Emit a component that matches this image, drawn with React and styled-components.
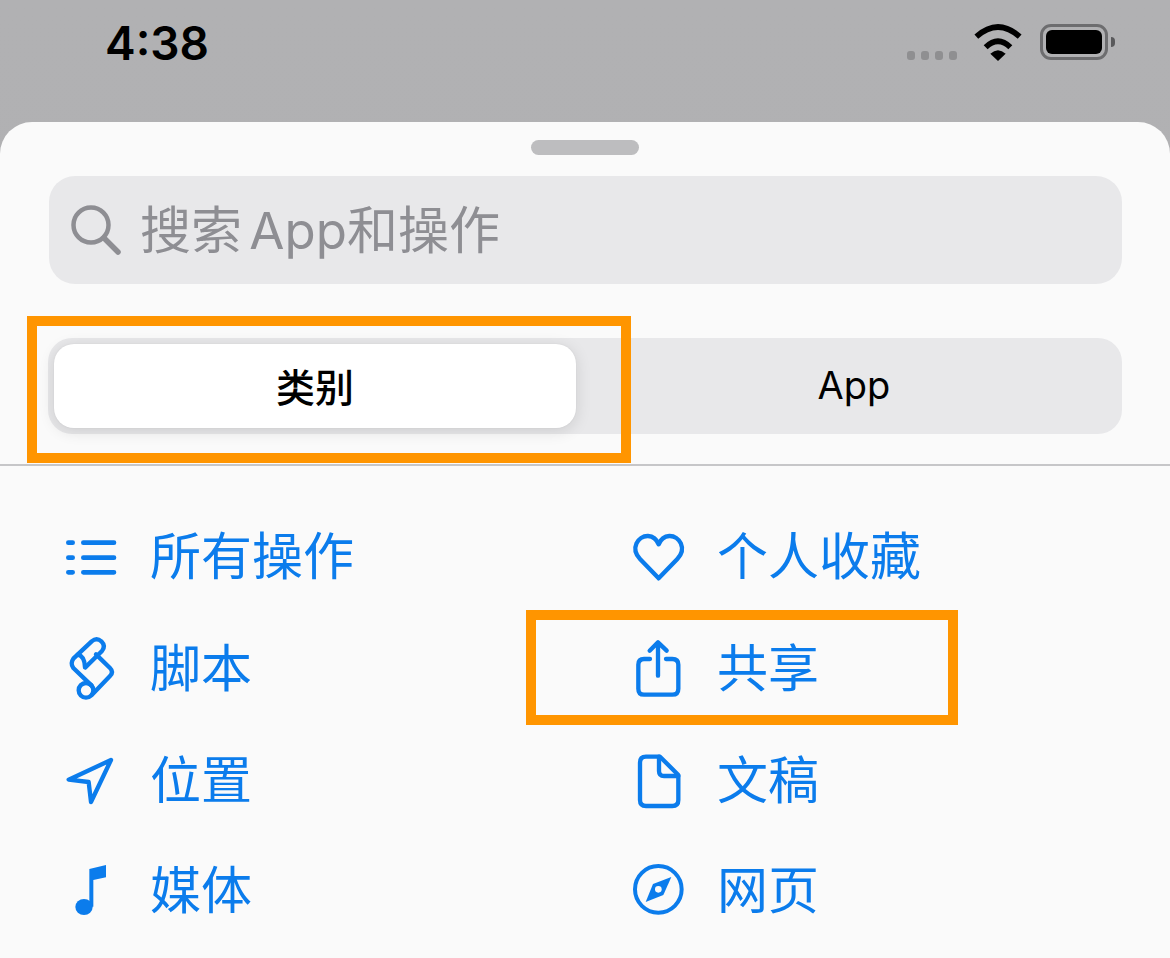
import React from 'react';
import styled, { createGlobalStyle } from 'styled-components';

const GlobalStyle = createGlobalStyle`
  html, body {
    margin: 0;
    padding: 0;
    height: 958px;
    overflow: hidden;
    background: #b0b0b2;
  }
  * { box-sizing: border-box; }
`;

const CJK = `"Inter", "Noto Sans CJK SC", sans-serif`;
const BLUE = '#0b7cec';
const ORANGE = '#ff9500';

const Page = styled('div')`
  position: relative;
  width: 1170px;
  height: 958px;
  overflow: hidden;
  font-family: ${CJK};
  background: linear-gradient(#b1b1b3 0%, #b0b0b2 75%, #a9a9ab 100%);
`;

const StatusBar = styled('div')`
  height: 122px;
  display: flex;
  align-items: flex-start;
  justify-content: space-between;
  padding: 15px 55px 0 105px;
`;

const Time = styled('div')`
  font-family: "Inter", sans-serif;
  font-size: 46px;
  line-height: 57px;
  font-weight: 600;
  color: #000;
`;

const StatusIcons = styled('div')`
  display: flex;
  align-items: flex-start;
  padding-top: 9px;
`;

const SignalDots = styled('div')`
  display: flex;
  gap: 5.5px;
  margin-top: 27px;
  margin-right: 16px;
`;

const SignalDot = styled('span')`
  width: 8.5px;
  height: 9px;
  border-radius: 3px;
  background: #8f8f91;
`;

const Battery = styled('div')`
  width: 68px;
  height: 36px;
  margin-left: 17px;
  padding: 3px;
  border: 3px solid #6d6d6f;
  border-radius: 11px;
`;

const BatteryFill = styled('div')`
  height: 100%;
  border-radius: 6px;
  background: #000;
`;

const BatteryNub = styled('div')`
  width: 4px;
  height: 10px;
  margin-top: 13px;
  margin-left: 3px;
  border-radius: 0 5px 5px 0;
  background: #59595b;
`;

const Sheet = styled('div')`
  height: 836px;
  background: #fafafa;
  border-radius: 32px 32px 0 0;
`;

const Handle = styled('div')`
  width: 108px;
  height: 15px;
  margin: 0 auto;
  position: relative;
  top: 18px;
  border-radius: 8px;
  background: #bdbdbf;
`;

const Search = styled('div')`
  height: 108px;
  margin: 39px 48px 0 49px;
  padding-left: 22px;
  display: flex;
  align-items: center;
  gap: 19px;
  border-radius: 26px;
  background: #e8e8ea;
`;

const Placeholder = styled('span')`
  font-size: 51px;
  line-height: 60px;
  word-spacing: -7px;
  color: #8e8e93;
  margin-top: 2px;
`;

const Segments = styled('div')`
  height: 96px;
  margin: 54px 48px 0 48px;
  padding: 6px 0 6px 6px;
  display: grid;
  grid-template-columns: 522px 1fr;
  column-gap: 10px;
  border-radius: 24px;
  background: #e8e8ea;
`;

const Segment = styled('div')`
  display: flex;
  align-items: center;
  justify-content: center;
  padding-bottom: 3px;
  font-size: ${p => (p.active ? '39px' : '38px')};
  font-weight: ${p => (p.active ? 500 : 400)};
  color: #000;
  border-radius: 20px;
  background: ${p => (p.active ? '#fff' : 'transparent')};
  box-shadow: ${p => (p.active ? '0 3px 16px rgba(0, 0, 0, 0.12), 0 0 2px rgba(0, 0, 0, 0.06)' : 'none')};
`;

const Divider = styled('div')`
  height: 2px;
  margin-top: 30px;
  background: #c6c6c8;
`;

const Categories = styled('div')`
  display: grid;
  grid-template-columns: 567px 1fr;
  grid-template-rows: 112px 112px 112px 108px;
  padding: 34px 0 0 61px;
`;

const Category = styled('div')`
  display: flex;
  align-items: center;
  gap: 29px;
  font-size: 51px;
  color: ${BLUE};
`;

const CategoryLabel = styled('span')`
  margin-bottom: 6px;
`;

const IconBox = styled('svg')`
  flex: none;
  width: 60px;
  height: 60px;
  overflow: visible;
`;

const Callout = styled('div')`
  position: absolute;
  left: ${p => p.x}px;
  top: ${p => p.y}px;
  width: ${p => p.w}px;
  height: ${p => p.h}px;
  border: 10px solid ${ORANGE};
`;

const lineProps = {
  fill: 'none',
  stroke: BLUE,
  strokeWidth: 13,
  strokeLinecap: 'round',
  strokeLinejoin: 'round',
};

const Wifi = () => (
  <svg width="50" height="38" viewBox="282 40 150 114" style={{ display: 'block' }}>
    <g fill="none" stroke="#000" strokeWidth="17">
      <path d="M292 78Q357 20 422 78" />
      <path d="M320 110Q357 74 394 110" />
    </g>
    <path d="M334 129Q357 108 380 129L357 151Z" fill="#000" />
  </svg>
);

const SearchIcon = () => (
  <svg width="50" height="50" viewBox="0 0 50 50" style={{ flex: 'none' }}>
    <circle cx="20" cy="20" r="17.5" fill="none" stroke="#8e8e93" strokeWidth="4.5" />
    <path d="M33 33L47 47" stroke="#8e8e93" strokeWidth="5.5" strokeLinecap="round" />
  </svg>
);

const ListIcon = () => (
  <IconBox viewBox="63 -30 180 180" {...lineProps}>
    <g strokeWidth="14">
      <path d="M85 45H98M85 90H98M85 134H98" transform="translate(0 -25)" />
      <path d="M130 45H222M130 90H222M130 134H222" transform="translate(0 -25)" />
    </g>
  </IconBox>
);

const ScriptIcon = () => (
  <IconBox viewBox="63 354 180 180" {...lineProps}>
    <path d="M168 403L210 444Q222 456 210 468L156 524" />
    <circle cx="138" cy="511" r="22" />
    <path d="M155 497L100 444Q90 430 100 416L155 364Q170 352 184 364Q198 378 186 393L136 442" />
    <path d="M113 404Q134 408 135 442" />
  </IconBox>
);

const LocationIcon = () => (
  <IconBox viewBox="63 690 180 180" {...lineProps}>
    <path d="M213 720L86 779L146 786L153 846Z" />
  </IconBox>
);

const MusicIcon = () => (
  <IconBox viewBox="63 1020 180 180">
    <path d="M148 1047L198 1035V1072L160 1080V1160H148Z" fill={BLUE} />
    <ellipse cx="132" cy="1161" rx="26" ry="24" fill={BLUE} />
  </IconBox>
);

const HeartIcon = () => (
  <IconBox viewBox="54 15 180 180" {...lineProps}>
    <path d="M146 172L90 114C60 82 84 44 114 45C130 46 140 55 146 70C152 55 162 46 178 45C208 44 232 82 202 114Z" />
  </IconBox>
);

const ShareIcon = () => (
  <IconBox viewBox="54 354 180 180" {...lineProps}>
    <path d="M144 467V368M119 392L144 367L170 392" />
    <path d="M120 417H102Q85 417 85 434V506Q85 524 102 524H187Q205 524 205 506V434Q205 417 187 417H168" />
  </IconBox>
);

const DocIcon = () => (
  <IconBox viewBox="54 690 180 180" {...lineProps}>
    <path d="M150 710H108Q90 710 90 728V840Q90 858 108 858H187Q205 858 205 840V765Z" />
    <path d="M147 710V753Q147 768 162 768H205" />
  </IconBox>
);

const CompassIcon = () => (
  <IconBox viewBox="54 1020 180 180">
    <circle cx="145" cy="1108" r="70" fill="none" stroke={BLUE} strokeWidth="12" />
    <path d="M184 1071L160 1125L107 1146L129 1092Z" fill={BLUE} />
    <circle cx="145" cy="1108" r="10" fill="#fafafa" />
  </IconBox>
);

const categories = [
  { icon: ListIcon, label: '所有操作' },
  { icon: HeartIcon, label: '个人收藏' },
  { icon: ScriptIcon, label: '脚本' },
  { icon: ShareIcon, label: '共享' },
  { icon: LocationIcon, label: '位置' },
  { icon: DocIcon, label: '文稿' },
  { icon: MusicIcon, label: '媒体' },
  { icon: CompassIcon, label: '网页' },
];

export default function App() {
  return (
    <Page>
      <GlobalStyle />
      <StatusBar>
        <Time>4:38</Time>
        <StatusIcons>
          <SignalDots>
            <SignalDot />
            <SignalDot />
            <SignalDot />
            <SignalDot />
          </SignalDots>
          <Wifi />
          <Battery>
            <BatteryFill />
          </Battery>
          <BatteryNub />
        </StatusIcons>
      </StatusBar>
      <Sheet>
        <Handle />
        <Search>
          <SearchIcon />
          <Placeholder>搜索 App和操作</Placeholder>
        </Search>
        <Segments>
          <Segment active>类别</Segment>
          <Segment>App</Segment>
        </Segments>
        <Divider />
        <Categories>
          {categories.map(({ icon: Icon, label }) => (
            <Category key={label}>
              <Icon />
              <CategoryLabel>{label}</CategoryLabel>
            </Category>
          ))}
        </Categories>
      </Sheet>
      <Callout x={27} y={316} w={604} h={147} />
      <Callout x={526} y={610} w={432} h={115} />
    </Page>
  );
}
